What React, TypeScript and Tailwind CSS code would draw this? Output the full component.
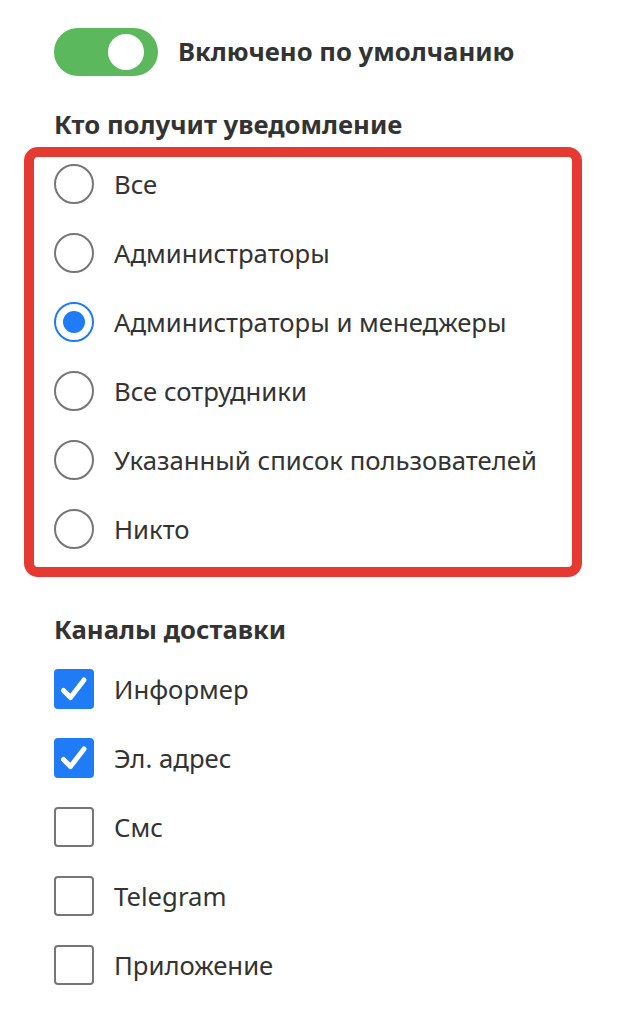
import React from "react";

const recipients = [
  "Все",
  "Администраторы",
  "Администраторы и менеджеры",
  "Все сотрудники",
  "Указанный список пользователей",
  "Никто",
];

const channels = [
  { label: "Информер", checked: true },
  { label: "Эл. адрес", checked: true },
  { label: "Смс", checked: false },
  { label: "Telegram", checked: false },
  { label: "Приложение", checked: false },
];

function Radio({ checked }: { checked: boolean }) {
  return checked ? (
    <span className="w-10 h-10 rounded-full border-2 border-[#1f7bf6] flex items-center justify-center shrink-0">
      <span className="w-[22px] h-[22px] rounded-full bg-[#1f7bf6]" />
    </span>
  ) : (
    <span className="w-10 h-10 rounded-full border-2 border-[#767676] shrink-0" />
  );
}

function Checkbox({ checked }: { checked: boolean }) {
  return checked ? (
    <span className="w-10 h-10 rounded-[4px] bg-[#1f7bf6] flex items-center justify-center shrink-0">
      <svg width="40" height="40" viewBox="0 0 40 40" fill="none">
        <path d="M9.5 21.5l7 7L30 11" stroke="white" strokeWidth="5" strokeLinecap="round" strokeLinejoin="round" />
      </svg>
    </span>
  ) : (
    <span className="w-10 h-10 rounded-[4px] border-2 border-[#767676] shrink-0" />
  );
}

export default function App() {
  return (
    <div className="min-h-[1020px] bg-white text-[#333333] pl-6 pt-7 font-['Noto_Sans',sans-serif]">
      {/* Toggle */}
      <div className="flex items-center gap-5 pl-[30px]">
        <span className="w-[104px] h-12 rounded-full bg-[#5cb85c] flex items-center justify-end pr-[14px]">
          <span className="w-9 h-9 rounded-full bg-white" />
        </span>
        <span className="text-[25.7px] leading-[30px] font-bold">Включено по умолчанию</span>
      </div>

      <div className="pl-[30px] mt-[34px] text-[25.7px] font-bold leading-[30px]">Кто получит уведомление</div>

      {/* Recipients */}
      <div className="mt-[7px] w-[558px] border-[10px] border-[#e53a32] rounded-[14px] pl-5 pt-[7px] pb-[18px] flex flex-col gap-[29px]">
        {recipients.map((r, i) => (
          <label key={r} className="flex items-center gap-5 h-10">
            <Radio checked={i === 2} />
            <span className="text-[25.7px] leading-[30px] pt-[2px]">{r}</span>
          </label>
        ))}
      </div>

      <div className="pl-[30px] mt-[38px] text-[25.7px] font-bold leading-[30px]">Каналы доставки</div>

      {/* Channels */}
      <div className="pl-[30px] mt-[24px] flex flex-col gap-[29px]">
        {channels.map((c) => (
          <label key={c.label} className="flex items-center gap-5 h-10">
            <Checkbox checked={c.checked} />
            <span className="text-[25.7px] leading-[30px] pt-[2px]">{c.label}</span>
          </label>
        ))}
      </div>
    </div>
  );
}
